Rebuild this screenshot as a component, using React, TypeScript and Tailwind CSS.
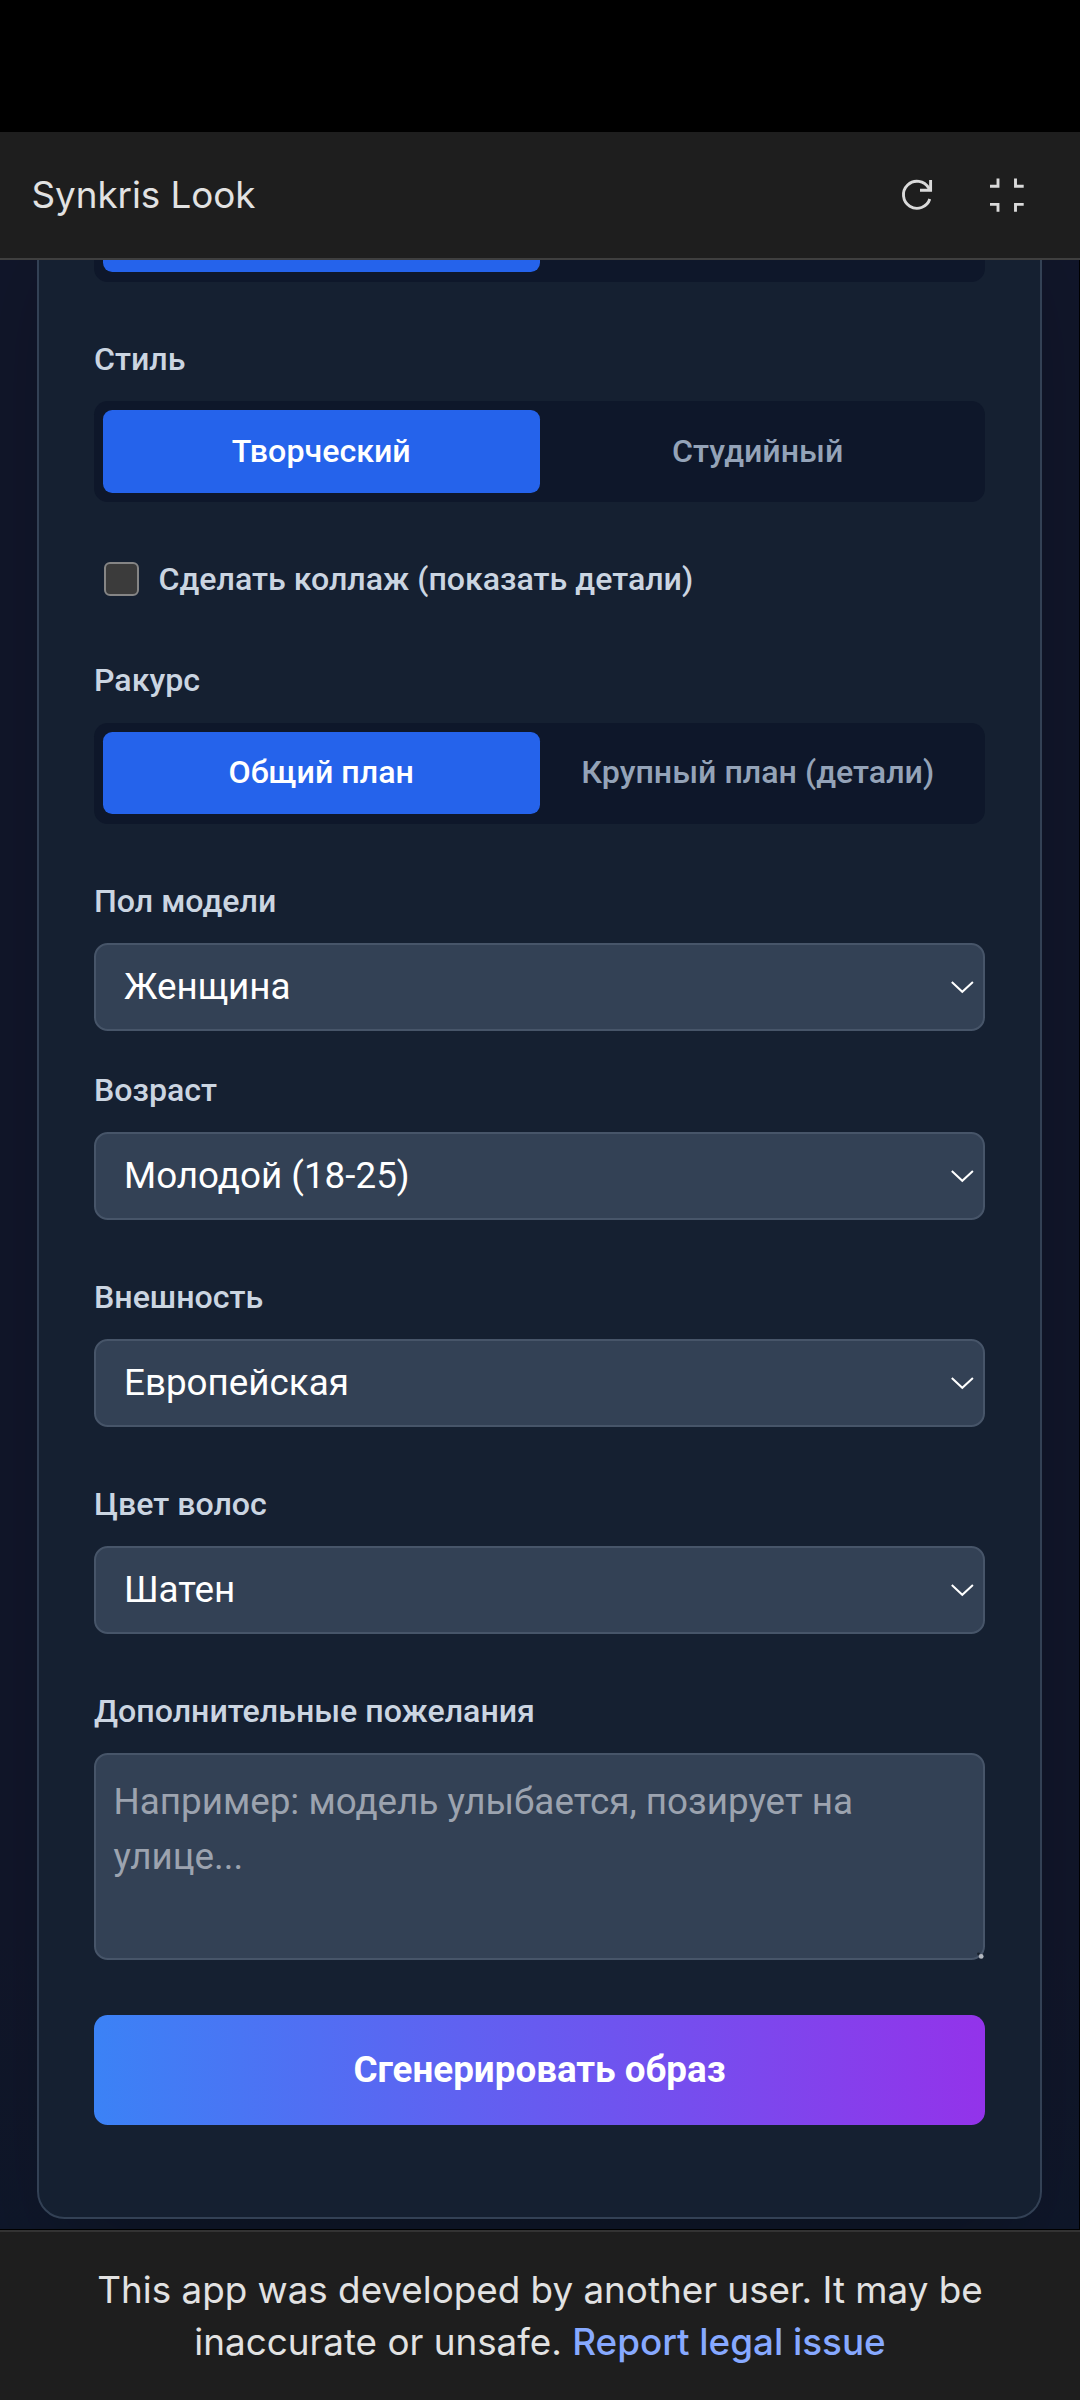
import React from "react";

function RefreshIcon() {
  return (
    <svg className="h-9 w-9" viewBox="0 0 36 36" fill="none" stroke="#dadada" strokeWidth="2.9">
      <path d="M29.8 22A13.5 13.5 0 1 1 28.7 11.1L30.6 13.3" />
      <path d="M30.6 3V13.3H20" />
    </svg>
  );
}

function ExitFullscreenIcon() {
  return (
    <svg className="h-9 w-9" viewBox="0 0 36 36" fill="none" stroke="#dadada" strokeWidth="2.9">
      <path d="M2 9.3H10V1.5M27.5 1.5V9.3H35.7M2 27.4H10V34.7M27.5 34.7V27.4H35.7" />
    </svg>
  );
}

function Chevron() {
  return (
    <svg className="h-[14px] w-[24px]" viewBox="0 0 24 14" fill="none" stroke="#ffffff" strokeWidth="2">
      <path d="M1.8 1L12.3 10.8L22.9 1" />
    </svg>
  );
}

function Label({ children }: { children: React.ReactNode }) {
  return (
    <div className="mb-[19px] h-[46px] whitespace-nowrap text-[32.15px] font-medium leading-[46px] text-[#cbd5e1]">
      {children}
    </div>
  );
}

function Segmented({ left, right, compact }: { left: string; right: string; compact?: boolean }) {
  const size = compact ? "h-[82px] pb-0.5" : "h-[83px] pb-px";
  return (
    <div className="flex h-[101px] rounded-[13.8px] bg-[#0e172a] px-[9px] pt-[9px] text-[32.2px] font-medium leading-[46px]">
      <button className={`flex flex-1 items-center justify-center rounded-[9.2px] bg-[#2563eb] text-white ${size}`}>
        {left}
      </button>
      <button className={`flex flex-1 items-center justify-center whitespace-nowrap text-[#94a3b8] ${size}`}>
        {right}
      </button>
    </div>
  );
}

function Select({ label, value }: { label: string; value: string }) {
  return (
    <div>
      <Label>{label}</Label>
      <div className="flex h-[88px] items-start justify-between rounded-[13.8px] border-2 border-[#475569] bg-[#334155] pl-[28px] pr-[9px] pt-[20px] text-[36.8px] leading-[43px] text-white">
        <span>{value}</span>
        <span className="mt-4">
          <Chevron />
        </span>
      </div>
    </div>
  );
}

export default function App() {
  return (
    <div className="flex h-[2400px] w-[1080px] flex-col overflow-hidden bg-black font-['Roboto',sans-serif]">
      <div className="h-[132px] shrink-0" />

      <header className="flex h-[128px] shrink-0 items-start justify-between border-b-2 border-[#3f3f3f] bg-[#1e1e1e] pl-[31.5px] pr-[56px] font-['Inter',sans-serif]">
        <h1 className="mt-[40px] text-[36.8px] leading-[45px] tracking-[-0.05px] text-[#e2e2e2]">Synkris Look</h1>
        <div className="mt-[45px] flex gap-[52px]">
          <RefreshIcon />
          <ExitFullscreenIcon />
        </div>
      </header>

      <main className="mr-px h-[1969px] shrink-0 overflow-hidden bg-[linear-gradient(to_bottom,#11162a_85%,#0f172a)] px-[37px]">
        <section className="-mt-[81px] h-[2040px] rounded-[27.6px] border-2 border-[#334155] bg-[#152031] px-[55px] shadow-[0_57px_115px_-27px_rgba(0,0,0,0.25)]">
          <Segmented left="" right="" compact />

          <div className="mt-[54px]">
            <Label>Стиль</Label>
            <Segmented left="Творческий" right="Студийный" />
          </div>

          <label className="mt-[54px] flex h-[46px] items-start pl-[10px]">
            <span className="mt-[6px] h-[34px] w-[35px] rounded-[6px] border-2 border-[#858585] bg-[#3b3b3b]" />
            <span className="ml-[19.5px] text-[32.15px] font-medium leading-[46px] text-[#cbd5e1]">
              Сделать коллаж (показать детали)
            </span>
          </label>

          <div className="mt-[55px] pb-px">
            <Label>Ракурс</Label>
            <div className="mt-5">
              <Segmented left="Общий план" right="Крупный план (детали)" compact />
            </div>
          </div>

          <div className="mt-[53px] flex flex-col gap-[54px]">
            <div className="flex flex-col gap-9">
              <Select label="Пол модели" value="Женщина" />
              <Select label="Возраст" value="Молодой (18-25)" />
            </div>
            <Select label="Внешность" value="Европейская" />
            <Select label="Цвет волос" value="Шатен" />
            <div>
              <Label>Дополнительные пожелания</Label>
              <div className="relative h-[207px] rounded-[13.8px] border-2 border-[#475569] bg-[#334155] pl-[17.5px] pr-[18px] pt-[19px] text-[36.8px] leading-[55px] text-[#9ca3af]">
                Например: модель улыбается, позирует на улице...
                <svg className="absolute -bottom-0.5 -right-0.5 h-3 w-3" viewBox="0 0 12 12">
                  <circle cx="5.5" cy="5.8" r="1.4" fill="#17202c" />
                  <circle cx="8.2" cy="8.4" r="2.4" fill="#b4b9c1" />
                </svg>
              </div>
            </div>
          </div>

          <button className="mt-[55px] flex h-[110px] w-full justify-center rounded-[13.8px] bg-[linear-gradient(to_right,#3b82f6,#9333ea)] pt-[33px] text-[36.8px] font-bold leading-[43px] text-white">
            Сгенерировать образ
          </button>
        </section>
      </main>

      <footer className="mt-px flex-1 border-t-2 border-[#333333] bg-[#1e1e1e] pt-[31.5px] text-center font-['Inter',sans-serif] text-[36.8px] leading-[52px] text-[#e2e2e2]">
        <p>
          This app was developed by another user. It may be
          <br />
          inaccurate or unsafe. <a className="font-medium text-[#87a9ff]">Report legal issue</a>
        </p>
      </footer>
    </div>
  );
}
